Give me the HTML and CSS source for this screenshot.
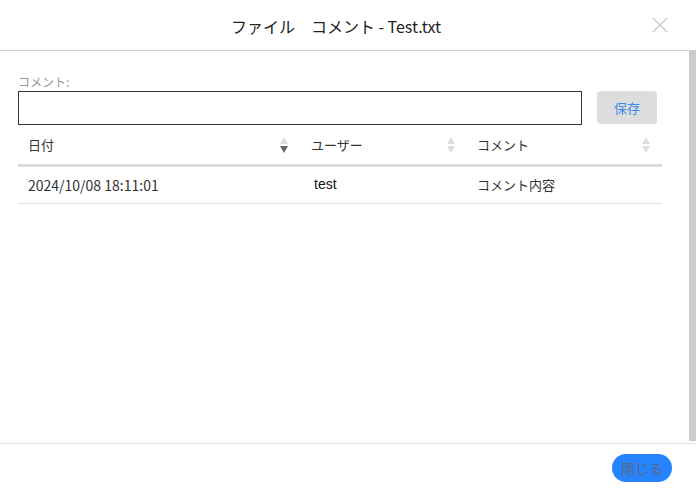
FILE: index.html
```html
<!DOCTYPE html>
<html lang="ja">
<head>
<meta charset="utf-8">
<link rel="stylesheet" href="styles.css">
</head>
<body>
<div class="dialog">
  <header class="dlg-header">
    <h1 class="title">ファイル　コメント - Test.txt</h1>
    <button class="close" aria-label="close">
      <svg width="16" height="16" viewBox="0 0 16 16"><path d="M1 1L15 15M15 1L1 15" stroke="#cfcfcf" stroke-width="1.5" fill="none"/></svg>
    </button>
  </header>
  <div class="dlg-body">
    <div class="content">
      <label class="label">コメント:</label>
      <div class="input-row">
        <input class="input" type="text">
        <button class="save">保存</button>
      </div>
      <table class="grid">
        <thead>
          <tr>
            <th class="c1"><div class="th"><span>日付</span><span class="sort"><i class="up"></i><i class="down on"></i></span></div></th>
            <th class="c2"><div class="th"><span>ユーザー</span><span class="sort"><i class="up"></i><i class="down"></i></span></div></th>
            <th class="c3"><div class="th"><span>コメント</span><span class="sort"><i class="up"></i><i class="down"></i></span></div></th>
          </tr>
        </thead>
        <tbody>
          <tr>
            <td class="date">2024/10/08 18:11:01</td>
            <td class="user">test</td>
            <td>コメント内容</td>
          </tr>
        </tbody>
      </table>
    </div>
    <div class="scrollbar"></div>
  </div>
  <footer class="dlg-footer">
    <button class="close-btn">閉じる</button>
  </footer>
</div>
</body>
</html>
```
FILE: styles.css
```css
* { box-sizing: border-box; }
html, body { margin: 0; padding: 0; background: #fff; }
body {
  font-family: "Noto Sans CJK JP", "Noto Sans", sans-serif;
  color: #333;
  width: 696px;
  height: 492px;
  overflow: hidden;
}
.dialog {
  display: flex;
  flex-direction: column;
  height: 492px;
}
.dlg-header {
  height: 51px;
  border-bottom: 1px solid #cfcfcf;
  display: flex;
  align-items: center;
  justify-content: center;
  padding-right: 24px;
  position: relative;
}
.title {
  margin: 0;
  font-size: 16px;
  font-weight: normal;
  color: #222;
  line-height: 20px;
  margin-top: 1px;
}
.close {
  position: absolute;
  left: 652px;
  top: 17px;
  width: 16px;
  height: 16px;
  padding: 0;
  border: 0;
  background: none;
  display: block;
}
.close svg { display: block; }
.dlg-body {
  flex: 1;
  display: flex;
  border-bottom: 1px solid #e2e2e2;
}
.content {
  flex: 1;
  padding: 22px 27px 0 18px;
}
.scrollbar {
  width: 7px;
  background: #cbcbcb;
  margin-top: -1px;
  margin-bottom: 2px;
}
.label {
  display: block;
  font-size: 12px;
  line-height: 18px;
  color: #999;
}
.input-row {
  display: flex;
  gap: 15px;
  margin-right: 5px;
}
.input {
  flex: 1;
  height: 34px;
  border: 1px solid #333;
  border-radius: 0;
  margin: 0;
  padding: 0 6px;
  font: inherit;
}
.save {
  width: 60px;
  height: 33px;
  border: 0;
  border-radius: 4px;
  background: #dddddd;
  color: #3a8bf0;
  font-family: inherit;
  font-size: 13px;
  padding: 0;
}
.grid {
  width: 100%;
  border-collapse: collapse;
  table-layout: fixed;
  font-size: 13px;
}
.grid .c1 { width: 282px; }
.grid .c2 { width: 167px; }
.grid th {
  font-weight: normal;
  text-align: left;
  height: 40px;
  padding: 0 9px 0 10px;
  border-bottom: 3px solid #dcdcdc;
  color: #333;
}
.grid th.c2 { padding-left: 11px; }
.th {
  display: flex;
  align-items: center;
  justify-content: space-between;
}
.sort {
  display: flex;
  flex-direction: column;
  gap: 2px;
  width: 9px;
  margin-top: 1px;
  margin-right: 2px;
}
.sort i {
  display: block;
  width: 0;
  height: 0;
  border-left: 4.5px solid transparent;
  border-right: 4.5px solid transparent;
}
.sort .up { border-bottom: 7px solid #dddddd; }
.sort .down { border-top: 7px solid #dddddd; }
.sort .down.on { border-top-color: #666; }
.grid td {
  height: 38px;
  padding: 0 10px;
  border-bottom: 1px solid #e0e0e0;
  color: #333;
}
.grid td.date {
  font-size: 14px;
}
.grid td.user {
  font-family: "Liberation Sans", Arial, sans-serif;
  font-size: 14px;
  color: #111;
  padding-left: 14px;
  padding-bottom: 2px;
}
.dlg-footer {
  height: 48px;
  display: flex;
  align-items: center;
  justify-content: flex-end;
  padding-right: 24px;
}
.close-btn {
  width: 60px;
  height: 28px;
  border: 0;
  border-radius: 14px;
  background: #2684ff;
  color: #5a6a80;
  font-family: inherit;
  font-size: 14px;
  padding: 0;
}
```
